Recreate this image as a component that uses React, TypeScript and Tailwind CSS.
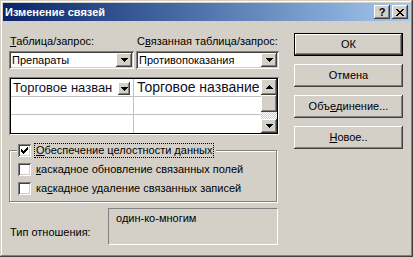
import React from "react";

// classic 3D edges
const RAISED =
  "bg-[#d4d0c8] shadow-[inset_-1px_-1px_#404040,inset_1px_1px_#fff,inset_-2px_-2px_#808080]";
const SUNKEN =
  "shadow-[inset_1px_1px_#808080,inset_-1px_-1px_#fff,inset_2px_2px_#404040,inset_-2px_-2px_#d4d0c8]";

function DownArrow({ up = false }: { up?: boolean }) {
  return (
    <svg
      width="7"
      height="4"
      viewBox="0 0 7 4"
      shapeRendering="crispEdges"
      className={up ? "rotate-180" : ""}
    >
      <rect x="0" y="0" width="7" height="1" fill="#000" />
      <rect x="1" y="1" width="5" height="1" fill="#000" />
      <rect x="2" y="2" width="3" height="1" fill="#000" />
      <rect x="3" y="3" width="1" height="1" fill="#000" />
    </svg>
  );
}

function Check() {
  const rows: [number, number, number][] = [
    [0, 6, 1],
    [1, 5, 2],
    [2, 0, 1],
    [2, 4, 3],
    [3, 0, 2],
    [3, 3, 3],
    [4, 0, 5],
    [5, 1, 3],
    [6, 2, 1],
  ];
  return (
    <svg width="7" height="7" viewBox="0 0 7 7" shapeRendering="crispEdges">
      {rows.map(([y, x, w], i) => (
        <rect key={i} x={x} y={y} width={w} height="1" fill="#000" />
      ))}
    </svg>
  );
}

function CloseGlyph() {
  const rows: [number, number, number][] = [
    [0, 0, 2],
    [0, 6, 2],
    [1, 1, 2],
    [1, 5, 2],
    [2, 2, 4],
    [3, 3, 2],
    [4, 2, 4],
    [5, 1, 2],
    [5, 5, 2],
    [6, 0, 2],
    [6, 6, 2],
  ];
  return (
    <svg width="8" height="7" viewBox="0 0 8 7" shapeRendering="crispEdges">
      {rows.map(([y, x, w], i) => (
        <rect key={i} x={x} y={y} width={w} height="1" fill="#000" />
      ))}
    </svg>
  );
}

function Checkbox({ checked = false }: { checked?: boolean }) {
  return (
    <div className={`flex h-[13px] w-[13px] shrink-0 items-center justify-center bg-white ${SUNKEN}`}>
      {checked && <Check />}
    </div>
  );
}

function Combo({ value, width }: { value: string; width: string }) {
  return (
    <div className={`flex h-[18px] bg-white p-[2px] ${SUNKEN} ${width}`}>
      <div className="flex-1 truncate pl-[1px] leading-[14px]">{value}</div>
      <div className={`flex w-[16px] items-center justify-center ${RAISED}`}>
        <DownArrow />
      </div>
    </div>
  );
}

function PushButton({ children, isDefault = false }: { children: React.ReactNode; isDefault?: boolean }) {
  if (isDefault) {
    return (
      <div className="h-[23px] border border-black">
        <div className={`flex h-full items-center justify-center ${RAISED}`}>{children}</div>
      </div>
    );
  }
  return <div className={`flex h-[23px] items-center justify-center ${RAISED}`}>{children}</div>;
}

export default function App() {
  return (
    <div className="h-[257px] w-[413px] overflow-hidden bg-[#d4d0c8] p-[3px] font-['Liberation_Sans',Arial,sans-serif] text-[11px] text-black shadow-[inset_-1px_-1px_#404040,inset_1px_1px_#d4d0c8,inset_-2px_-2px_#808080,inset_2px_2px_#fff]">
      {/* Title bar */}
      <div className="flex h-[18px] items-center bg-linear-to-r from-[#0a246a] to-[#a6caf0] pl-[2px] pr-[2px]">
        <span className="flex-1 text-[11px] font-bold leading-[18px] text-white">Изменение связей</span>
        <div className={`flex h-[14px] w-[16px] items-center justify-center text-[11px] font-bold leading-none ${RAISED}`}>
          ?
        </div>
        <div className={`ml-[2px] flex h-[14px] w-[16px] items-center justify-center ${RAISED}`}>
          <CloseGlyph />
        </div>
      </div>

      <div className="flex pl-[6px] pt-[12px]">
        {/* Left side */}
        <div className="flex w-[270px] flex-col pt-[1px]">
          <div className="flex h-[14px] leading-[14px]">
            <div className="w-[127px] pl-[1px]">
              <u>Т</u>аблица/запрос:
            </div>
            <div className="pl-[1px]">
              С<u>в</u>язанная таблица/запрос:
            </div>
          </div>

          <div className="mt-[3px] flex gap-[2px]">
            <Combo value="Препараты" width="w-[125px]" />
            <Combo value="Противопоказания" width="w-[143px]" />
          </div>

          {/* Field grid */}
          <div className="mt-[8px] h-[58px] p-px shadow-[inset_1px_1px_#808080,inset_-1px_-1px_#fff]">
            <div className="flex h-full border border-black bg-white text-[13px] leading-[17px] text-[#10102a]">
              <div className="flex flex-1 flex-col">
                <div className="flex h-[18px] border-b border-[#c0c0c0]">
                  <div className="flex w-[123px] border-r border-[#c0c0c0]">
                    <div className="flex-1 whitespace-nowrap pl-[2px]">Торговое назван</div>
                    <div className={`mb-[1px] mr-[3px] mt-[3px] flex w-[12px] items-center justify-center ${RAISED}`}>
                      <DownArrow />
                    </div>
                  </div>
                  <div className="flex-1 whitespace-nowrap pl-[3px] text-[14px]">Торговое название</div>
                </div>
                <div className="flex h-[18px] border-b border-[#c0c0c0]">
                  <div className="w-[123px] border-r border-[#c0c0c0]" />
                  <div className="flex-1" />
                </div>
                <div className="flex flex-1">
                  <div className="w-[123px] border-r border-[#c0c0c0]" />
                  <div className="flex-1" />
                </div>
              </div>
              {/* Scrollbar */}
              <div className="flex w-[16px] flex-col">
                <div className={`flex h-[16px] items-center justify-center ${RAISED}`}>
                  <DownArrow up />
                </div>
                <div className={`h-[17px] ${RAISED}`} />
                <div className="flex-1 bg-[repeating-conic-gradient(#fff_0%_25%,#d4d0c8_0%_50%)] bg-[length:2px_2px]" />
                <div className={`flex h-[14px] items-center justify-center ${RAISED}`}>
                  <DownArrow />
                </div>
              </div>
            </div>
          </div>

          {/* Referential integrity */}
          <fieldset className="mt-[8px] w-[268px] border border-[#808080] pb-[6px] shadow-[inset_1px_1px_#fff,1px_1px_#fff]">
            <legend className="ml-[7px] flex h-[15px] items-center bg-[#d4d0c8] pl-[1px] pr-[2px]">
              <Checkbox checked />
              <span className="ml-[3px] border border-dotted border-black px-[1px] leading-[13px]">
                <u>О</u>беспечение целостности данных
              </span>
            </legend>
            <div className="flex flex-col gap-[6px] pl-[8px] pt-[5px]">
              <div className="flex h-[13px] items-center">
                <Checkbox />
                <span className="ml-[5px] leading-[13px]">
                  <u>к</u>аскадное обновление связанных полей
                </span>
              </div>
              <div className="flex h-[13px] items-center">
                <Checkbox />
                <span className="ml-[5px] leading-[13px]">
                  ка<u>с</u>кадное удаление связанных записей
                </span>
              </div>
            </div>
          </fieldset>

          {/* Relationship type */}
          <div className="mt-[6px] flex">
            <div className="w-[99px] pl-[1px] pt-[17px] leading-[14px]">Тип отношения:</div>
            <div className="h-[37px] w-[170px] border border-b-white border-l-[#808080] border-r-white border-t-[#808080] pl-[7px] pt-[2px] leading-[14px]">
              один-ко-многим
            </div>
          </div>
        </div>

        {/* Buttons */}
        <div className="ml-[15px] flex w-[109px] flex-col gap-[8px]">
          <PushButton isDefault>ОК</PushButton>
          <PushButton>Отмена</PushButton>
          <PushButton>
            Объ<u>е</u>динение...
          </PushButton>
          <PushButton>
            <u>Н</u>овое..
          </PushButton>
        </div>
      </div>
    </div>
  );
}
